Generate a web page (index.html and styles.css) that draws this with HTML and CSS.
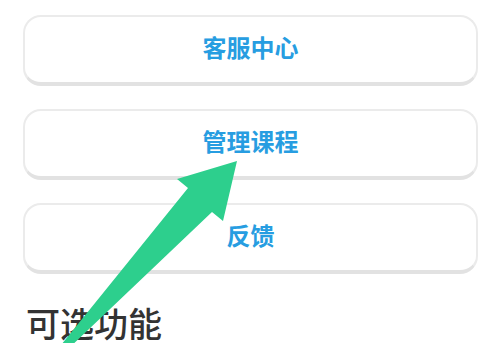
FILE: index.html
```html
<!DOCTYPE html>
<html lang="zh">
<head>
<meta charset="utf-8">
<link rel="stylesheet" href="styles.css">
</head>
<body>
<div class="page">
  <div class="menu">
    <div class="btn">客服中心</div>
    <div class="btn">管理课程</div>
    <div class="btn">反馈</div>
  </div>
  <h2 class="section-title">可选功能</h2>
  <svg class="arrow" width="496" height="343" viewBox="0 0 496 343" xmlns="http://www.w3.org/2000/svg">
    <polygon points="237,161 223,221 212,212 67,350 57,350 188,188 177,179" fill="#2dcf8d"/>
  </svg>
</div>
</body>
</html>
```

FILE: styles.css
```css
html, body {
  margin: 0;
  padding: 0;
  background: #ffffff;
  overflow: hidden;
}
.page {
  position: relative;
  width: 496px;
  height: 343px;
  overflow: hidden;
  font-family: "Noto Sans CJK SC", "Noto Sans", sans-serif;
}
.menu {
  display: flex;
  flex-direction: column;
  gap: 23px;
  padding: 15px 18px 0 23px;
}
.btn {
  box-sizing: border-box;
  height: 71px;
  border: 2px solid #ebebeb;
  border-bottom: 4px solid #e2e2e2;
  border-radius: 18px;
  background: #ffffff;
  display: flex;
  align-items: center;
  justify-content: center;
  color: #279de1;
  font-size: 24px;
  font-weight: 700;
  padding-bottom: 7px;
}
.section-title {
  margin: 29px 0 0 26px;
  font-size: 34px;
  font-weight: 500;
  line-height: 40px;
  color: #333333;
}
.arrow {
  position: absolute;
  left: 0;
  top: 0;
  pointer-events: none;
}
```
